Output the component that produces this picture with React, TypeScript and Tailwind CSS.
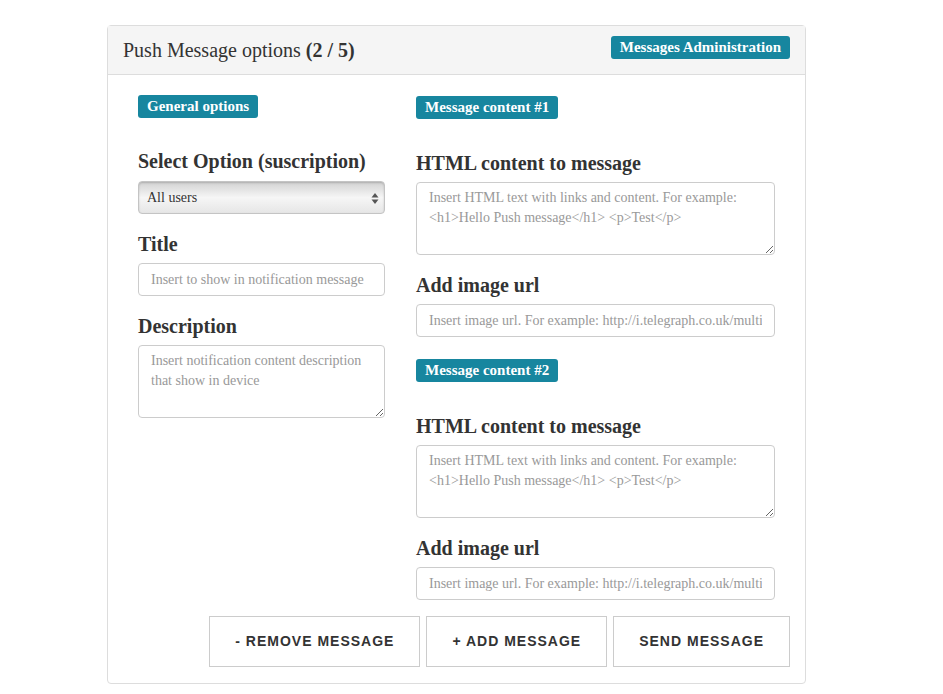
import React from 'react';

const serif = { fontFamily: '"Liberation Serif", "Times New Roman", serif' };

function Badge({ children, className = '' }: { children: React.ReactNode; className?: string }) {
  return (
    <span
      className={`inline-block rounded-[3px] bg-[#17869f] px-[9px] text-[15px] leading-[23px] font-bold text-white ${className}`}
    >
      {children}
    </span>
  );
}

function Label({ children, className = '' }: { children: React.ReactNode; className?: string }) {
  return <h3 className={`text-[20px] leading-[22px] font-bold text-[#333] ${className}`}>{children}</h3>;
}

function TextInput({ placeholder }: { placeholder: string }) {
  return (
    <input
      type="text"
      placeholder={placeholder}
      className="block h-[33px] w-full rounded-[4px] border border-[#ccc] bg-white px-3 text-[14px] text-[#555] placeholder:text-[#999] focus:outline-none"
      style={serif}
    />
  );
}

function TextArea({ placeholder }: { placeholder: string }) {
  return (
    <textarea
      placeholder={placeholder}
      className="block h-[73px] w-full rounded-[4px] border border-[#ccc] bg-white px-3 py-[5px] text-[14px] leading-[20px] text-[#555] placeholder:text-[#999] focus:outline-none"
      style={serif}
    />
  );
}

function MessageContent({ index }: { index: number }) {
  return (
    <div>
      <Badge>Message content #{index}</Badge>
      <Label className="mt-[33px]">HTML content to message</Label>
      <div className="mt-2">
        <TextArea placeholder="Insert HTML text with links and content. For example: <h1>Hello Push message</h1> <p>Test</p>" />
      </div>
      <Label className="mt-[19px]">Add image url</Label>
      <div className="mt-2">
        <TextInput placeholder="Insert image url. For example: http://i.telegraph.co.uk/multimedia/archive/03589/Wellcome_Image_Awa_3589699k.jpg" />
      </div>
    </div>
  );
}

export default function App() {
  const buttons = ['- Remove message', '+ Add message', 'Send message'];

  return (
    <div className="min-h-[694px] bg-white pt-[25px] pb-[10px]" style={serif}>
      <div className="ml-[107px] w-[699px] rounded-[4px] border border-[#ddd] bg-white">
        {/* Header */}
        <div className="flex h-[49px] items-start justify-between border-b border-[#ddd] bg-[#f5f5f5] pl-[15px] pr-[15px]">
          <h2 className="mt-[12px] text-[20px] leading-[24px] text-[#333]">
            Push Message options <b>(2 / 5)</b>
          </h2>
          <Badge className="mt-[10px] text-[14px] leading-[22px]">Messages Administration</Badge>
        </div>

        {/* Body */}
        <div className="px-[30px] pt-[19px]">
          <div className="grid grid-cols-[247px_359px] gap-x-[31px]">
            <div>
              <Badge>General options</Badge>
              <Label className="mt-[32px]">Select Option (suscription)</Label>
              <div className="relative mt-[9px] h-[33px] rounded-[4px] border border-[#c4c4c4] bg-gradient-to-b from-[#d2d2d2] via-[#f6f6f6] to-[#e6e6e6] shadow-[inset_0_1px_2px_rgba(0,0,0,0.18)]">
                <select
                  className="h-full w-full appearance-none bg-transparent pl-[8px] text-[14px] text-[#333] focus:outline-none"
                  style={serif}
                  defaultValue="all"
                >
                  <option value="all">All users</option>
                </select>
                <svg
                  className="pointer-events-none absolute right-[5px] top-[11px]"
                  width="8"
                  height="11"
                  viewBox="0 0 8 11"
                >
                  <path d="M4 0 L7.5 4.5 H0.5 Z" fill="#555" />
                  <path d="M4 11 L7.5 6.5 H0.5 Z" fill="#555" />
                </svg>
              </div>
              <Label className="mt-[19px]">Title</Label>
              <div className="mt-2">
                <TextInput placeholder="Insert to show in notification message" />
              </div>
              <Label className="mt-[19px]">Description</Label>
              <div className="mt-2">
                <TextArea placeholder="Insert notification content description that show in device" />
              </div>
            </div>

            <div>
              <div className="pt-px">
                <MessageContent index={1} />
              </div>
              <div className="mt-[21px]">
                <MessageContent index={2} />
              </div>
            </div>
          </div>
        </div>

        {/* Actions */}
        <div className="flex justify-end gap-[6px] pt-[16px] pr-[15px] pb-[16px]">
          {buttons.map((label) => (
            <button
              key={label}
              className="h-[51px] border border-[#ccc] bg-white px-[25px] text-[14px] font-bold uppercase tracking-[1px] text-[#333]"
              style={{ fontFamily: '"Liberation Sans", Arial, sans-serif' }}
            >
              {label}
            </button>
          ))}
        </div>
      </div>
    </div>
  );
}
